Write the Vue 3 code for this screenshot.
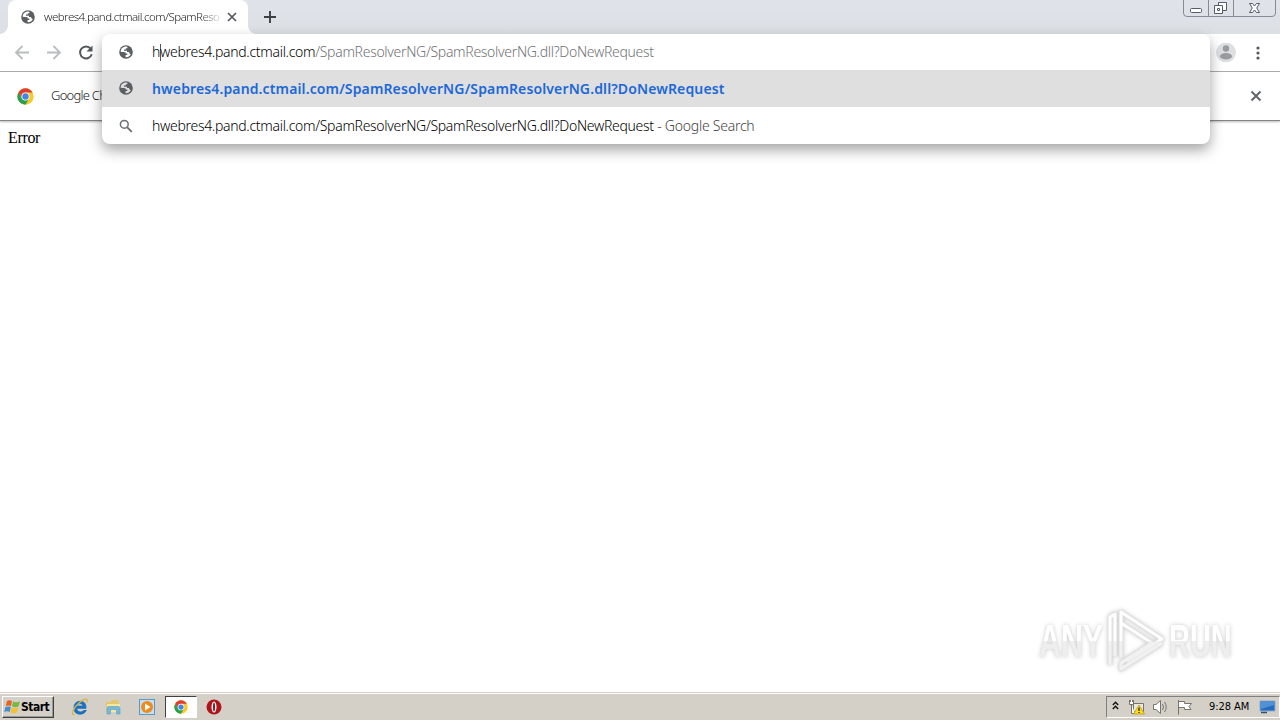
<script setup>
import { h } from 'vue'

const host = 'webres4.pand.ctmail.com'
const path = '/SpamResolverNG/SpamResolverNG.dll?DoNewRequest'

const Globe = () =>
  h('svg', { viewBox: '0 0 14 14', width: 14, height: 14 }, [
    h('circle', { cx: 7, cy: 7, r: 6.8, fill: '#5b5e62' }),
    h('path', {
      fill: 'var(--land, #fff)',
      d: 'M5.5 1.7C3.2 2.3 1.6 4.4 1.6 6.8L4.2 7.1 6.6 7.2V8.6H8.3V10.1H6.6V12.2C8.7 12.4 10.9 11.2 11.8 9.2L10.6 8.6 10 7H8V5.8H5V4.5H6.8V3.3H8.4V1.9C7.5 1.5 6.4 1.4 5.5 1.7Z',
    }),
  ])

const Chrome = (props) =>
  h('svg', { viewBox: '0 0 48 48', width: props.size, height: props.size }, [
    h('circle', { cx: 24, cy: 24, r: 23, fill: '#fbc924' }),
    h('path', { fill: '#df3d32', d: 'M4.1 12.5A23 23 0 0 1 43.9 12.5H24L14 29.8Z' }),
    h('path', { fill: '#27a052', d: 'M4.1 12.5 14 29.8 24 35.5 34 29.8 24 47A23 23 0 0 1 4.1 12.5Z' }),
    h('circle', { cx: 24, cy: 24, r: 11.5, fill: '#fff' }),
    h('circle', { cx: 24, cy: 24, r: 9, fill: '#4285e8' }),
  ])
Chrome.props = ['size']
</script>

<template>
  <div class="screen">
    <header class="tabstrip">
      <div class="tab">
        <Globe class="tab-globe" />
        <span class="tab-title">{{ host }}/SpamReso</span>
        <svg class="tab-close" width="10" height="10" viewBox="0 0 10 10"><path d="M1 1 9 9M9 1 1 9" stroke="#54575b" stroke-width="1.7" /></svg>
      </div>
      <svg class="new-tab" width="12" height="12" viewBox="0 0 12 12"><path d="M6 0V12M0 6H12" stroke="#3c4043" stroke-width="1.9" /></svg>
      <svg class="window-buttons" width="94" height="17" viewBox="0 0 94 17">
        <path d="M.5 0V13Q.5 16.5 4 16.5H89Q92.500 16.500 92.500 13V0M25.500 0V16M50.500 0V16" fill="none" stroke="#868b95" />
        <g fill="#fff" stroke="#565d6a">
          <rect x="7.500" y="8.500" width="11" height="4" rx="1" />
          <path d="M35.500 2.500H43.500V10.500H35.500Z" />
          <path d="M31.500 5.500H39.500V13.500H31.500Z" />
          <path d="M34.500 8.500H36.500V10.500H34.500Z" />
          <path d="M66.500 3.500H69.500L71.500 6 73.500 3.500H76.500L73.700 8 76.500 12.500H73.500L71.500 10 69.500 12.500H66.500L69.300 8Z" />
        </g>
      </svg>
    </header>

    <div class="toolbar">
      <svg class="nav" width="16" height="16" viewBox="0 0 16 16"><path d="M15 8H2M8.500 1.500 2 8 8.500 14.500" fill="none" stroke="#babcbe" stroke-width="1.800" /></svg>
      <svg class="nav" width="16" height="16" viewBox="0 0 16 16"><path d="M1 8H14M7.500 1.500 14 8 7.500 14.500" fill="none" stroke="#babcbe" stroke-width="1.800" /></svg>
      <svg class="nav" width="16" height="16" viewBox="0 0 16 16"><path d="M12.700 4.100A6 6 0 1 0 13.800 9.800" fill="none" stroke="#55585c" stroke-width="2" /><path d="M14.500 1V7H8.500Z" fill="#55585c" /></svg>
      <span class="spacer"></span>
      <svg class="avatar" width="20" height="20" viewBox="0 0 20 20"><circle cx="10" cy="10" r="10" fill="#dedfe1" /><circle cx="10" cy="6" r="3.200" fill="#999b9e" /><ellipse cx="10" cy="13.700" rx="6" ry="3.200" fill="#999b9e" /></svg>
      <svg class="menu" width="4" height="14" viewBox="0 0 4 14" fill="#55585c"><circle cx="2" cy="2" r="1.600" /><circle cx="2" cy="7" r="1.600" /><circle cx="2" cy="12" r="1.600" /></svg>
    </div>

    <div class="infobar">
      <Chrome :size="17" />
      <span class="info-text">Google Chrome</span>
      <span class="spacer"></span>
      <svg width="12" height="12" viewBox="0 0 12 12"><path d="M1.500 1.500 10.500 10.500M10.500 1.500 1.500 10.500" stroke="#606367" stroke-width="1.900" /></svg>
    </div>

    <main class="page">Error</main>

    <div class="omnibox">
      <div class="row">
        <Globe />
        <span class="line"><span>h<i class="caret"></i>{{ host }}</span><span class="dim">{{ path }}</span></span>
      </div>
      <div class="row selected">
        <Globe />
        <span class="line bold">h{{ host }}{{ path }}</span>
      </div>
      <div class="row">
        <svg width="14" height="14" viewBox="0 0 14 14" fill="none" stroke="#6b6e72"><circle cx="5.300" cy="5.300" r="3.900" stroke-width="1.500" /><path d="M8.300 8.300 12.800 12.800" stroke-width="1.900" /></svg>
        <span class="line">h{{ host }}{{ path }}<span class="suffix"> - Google Search</span></span>
      </div>
    </div>

    <div class="watermark">
      <span class="word any"><span>ANY</span></span>
      <svg width="60" height="66" viewBox="0 0 60 66" fill="none" stroke-linejoin="round">
        <defs><linearGradient id="fade" x1="0" y1="0" x2="0" y2="66" gradientUnits="userSpaceOnUse"><stop offset=".5" stop-color="#fff" /><stop offset=".5" stop-color="#f1f1f1" /></linearGradient></defs>
        <path d="M4 57V9L9 6V48M15 49V4L56 31 21 53M56 35 15 61V55L46 35 15 15" stroke="#e0e0e0" stroke-width="5" />
        <path d="M4 57V9L9 6V48M15 49V4L56 31 21 53M56 35 15 61V55L46 35 15 15" stroke="url(#fade)" stroke-width="3" />
      </svg>
      <span class="word run"><span>RUN</span></span>
    </div>

    <footer class="taskbar">
      <div class="start">
        <svg width="17" height="16" viewBox="0 0 17 16"><path d="M3 2Q5.500 .5 8 2L7 7Q4.500 5.800 1.700 7Z" fill="#e66325" /><path d="M9 2.500Q12 4 16 2.500L14.500 7.500Q11 9 8 7.300Z" fill="#78b943" /><path d="M1.500 8Q4.500 6.800 6.800 8L5.700 13Q3 11.500.2 13Z" fill="#438ed0" /><path d="M7.700 8.500Q11 10 14.200 8.500L13 13.500Q9.700 15 6.500 13.500Z" fill="#f5c131" /></svg>
        <b>Start</b>
      </div>
      <div class="launchers">
        <svg width="18" height="18" viewBox="0 0 18 18"><path d="M14 10.300H5.500Q6 14 9.300 14 11.500 14 12.500 12.500H15.300Q13.500 16.200 9.300 16.200 3 16.200 3 9.700 3.200 3.300 9.300 3.300 15.300 3.500 15 10.300ZM5.700 8H12.300Q11.800 5.500 9 5.500 6.300 5.500 5.700 8Z" fill="#1b6fc0" stroke="#1b6fc0" stroke-width=".9" fill-rule="evenodd" /><path d="M3.500 16.500C-1 17 3 9 8.500 4.500S17.500.5 15.800 4.500" fill="none" stroke="#d9b647" stroke-width="1.400" /></svg>
        <svg width="18" height="18" viewBox="0 0 18 18"><path d="M2 4H7L8 2H14L15 5V14H2Z" fill="#e3c66e" /><path d="M3 6H16V14H3Z" fill="#f7e6a0" /><path d="M3 16V10Q3 8.500 5 8.500H14Q16 8.500 16 10V16H12.500V11.500H6.500V16Z" fill="#74b9db" stroke="#5ba0c4" stroke-width=".6" /></svg>
        <svg width="18" height="18" viewBox="0 0 18 18"><rect x="1.500" y="1.500" width="15" height="15" fill="#c4e0f4" stroke="#5a98c8" /><circle cx="9" cy="9" r="6" fill="#ef8b1a" /><path d="M7 5.500 12.500 9 7 12.500Z" fill="#fff" /></svg>
        <div class="active-app"><Chrome :size="14" /></div>
        <svg width="16" height="16" viewBox="0 0 16 16"><circle cx="8" cy="8" r="7.500" fill="#ad151a" /><ellipse cx="8" cy="8" rx="2.500" ry="5.500" fill="#fff" /><ellipse cx="8" cy="8" rx="1" ry="4.500" fill="#8f1518" /></svg>
      </div>
      <span class="spacer"></span>
      <div class="tray">
        <svg class="chevrons" width="7" height="9" viewBox="0 0 7 9"><path d="M.8 4 3.500 1.300 6.200 4M.8 8 3.500 5.300 6.200 8" fill="none" stroke="#111" stroke-width="1.400" /></svg>
        <svg class="network" width="17" height="16" viewBox="0 0 17 16"><path d="M5.500 4.500H15.500V12.500H5.500Z" fill="#e9e7e2" stroke="#77746e" /><path d="M1.500 1V5.500H5.500V1M3.500 5.500V14.500H7M2.500 1V3M4.500 1V3" fill="#fff" stroke="#77746e" /><path d="M11 6 16.500 15H5.500Z" fill="#ffdb20" stroke="#b59600" stroke-width=".7" /><path d="M11 8.500V12M11 13V14" stroke="#333" stroke-width="1.400" /></svg>
        <svg class="sound" width="17" height="16" viewBox="0 0 17 16" fill="none" stroke="#77746e"><path d="M1.500 5.500H4L8.500 1.500V14.500L4 10.500H1.500Z" fill="#fff" /><path d="M10.500 5Q12.500 8 10.500 11M12.500 3Q16 8 12.500 13" /></svg>
        <svg class="flag" width="17" height="16" viewBox="0 0 17 16"><path d="M2.500 1V15.500M2.500 2.500H8.500V4.500H15.500L13 7.500 15 10.500H8.500V8.500H2.500" fill="#fff" stroke="#77746e" /></svg>
        <span class="clock">9:28 AM</span>
        <svg width="17" height="14" viewBox="0 0 17 14"><path d="M1 1H16V11H1Z" fill="#286bbd" stroke="#8aaed3" /><path d="M2 2H15V5L2 9Z" fill="#5192d5" /><path d="M2 12.500H8" stroke="#334e70" stroke-width="1.500" /></svg>
      </div>
    </footer>
  </div>
</template>

<style>
body { margin: 0; overflow: hidden; }
</style>

<style scoped>
.screen { position: relative; display: flex; flex-direction: column; width: 1280px; height: 720px; overflow: hidden; background: #fff; font-family: "Noto Sans", "Open Sans", sans-serif; font-size: 14px; color: #222; }
svg { display: block; flex: none; }
.spacer { flex: 1; }
.tabstrip { display: flex; height: 34px; padding-left: 8px; background: linear-gradient(#e0e4ea, #dcdfe4); }
.tab { position: relative; display: flex; align-items: center; width: 240px; height: 34px; box-sizing: border-box; padding-left: 13px; background: #fff; border-radius: 8px 8px 0 0; }
.tab::before, .tab::after { content: ""; position: absolute; bottom: 0; width: 8px; height: 8px; }
.tab::before { left: -8px; background: radial-gradient(circle at 0 0, transparent 7.5px, #fff 8px); }
.tab::after { right: -8px; background: radial-gradient(circle at 100% 0, transparent 7.5px, #fff 8px); }
.tab-title { width: 177px; margin: -1px 0 0 9px; white-space: nowrap; font-size: 11.5px; font-weight: 350; letter-spacing: -.53px; -webkit-mask-image: linear-gradient(90deg, #000 155px, transparent 180px); mask-image: linear-gradient(90deg, #000 155px, transparent 180px); }
.tab-close { margin-left: 6px; }
.new-tab { margin: 11px 0 0 16px; }
.window-buttons { margin-left: auto; margin-right: 3px; }
.toolbar { display: flex; align-items: center; height: 37px; padding-left: 14px; border-bottom: 1px solid #aaa; }
.nav { margin-right: 16px; transform: translateY(-.5px); }
.avatar { margin-right: 20px; transform: translateY(-.5px); }
.menu { margin-right: 20px; }
.infobar { display: flex; align-items: center; height: 48px; padding: 0 18px 0 17px; border-bottom: 1px solid #858585; box-shadow: 0 1px 2px #bbb; }
.info-text { margin: -2px 0 0 17px; font-size: 13px; font-weight: 350; letter-spacing: -.75px; }
.page { flex: 1; padding: 8px 8px; font: 16px/18px "Liberation Serif", serif; letter-spacing: -.35px; color: #000; }
.omnibox { position: absolute; left: 102px; top: 34px; width: 1108px; height: 110px; border-radius: 8px; background: #fff; box-shadow: 0 6px 14px rgba(0, 0, 0, .36); }
.row { display: flex; align-items: center; height: 37px; padding-left: 17px; }
.row:first-child { height: 36px; }
.row:first-child .line { margin-top: -2px; }
.selected { background: #dfdfdf; --land: #dfdfdf; }
.selected svg { margin-top: -2px; }
.line { margin-left: 19px; white-space: nowrap; font-size: 14px; font-weight: 300; letter-spacing: -.306px; color: #000; }
.bold { font-weight: 600; color: #1b68d8; letter-spacing: .13px; }
.dim { color: #707274; }
.suffix { color: #444; white-space: pre; letter-spacing: -.24px; }
.caret { display: inline-block; width: 1px; height: 17px; margin-right: -1px; vertical-align: -4px; background: #555; }
.watermark { position: absolute; left: 1039px; top: 608px; display: flex; align-items: center; width: 200px; height: 66px; filter: drop-shadow(0 0 2px #c8c8c8); }
.word { flex: none; width: 67px; font: 700 46px/48px "Liberation Sans", sans-serif; }
.word span { display: inline-block; white-space: nowrap; color: transparent; background: linear-gradient(#fff 50%, #eee 50%); background-clip: text; -webkit-background-clip: text; transform-origin: left; }
.any span { transform: scaleX(.66); }
.run { margin-left: 3px; }
.run span { transform: scaleX(.63); }
.taskbar { display: flex; align-items: center; height: 28px; box-sizing: border-box; padding-bottom: 1px; background: #d4d0c8; border-top: 1px solid #d4d0c8; box-shadow: inset 0 1px #fff; font-family: "DejaVu Sans Condensed", "Noto Sans", sans-serif; font-size: 11px; color: #000; }
.start { display: flex; align-items: center; width: 52px; height: 22px; margin: 1px 0 0 2px; box-sizing: border-box; padding-left: 1px; border: 1px solid; border-color: #fff #404040 #404040 #fff; box-shadow: inset -1px -1px #999; font: 12px "DejaVu Sans Condensed", sans-serif; letter-spacing: -.5px; }
.launchers { display: flex; align-items: center; margin-left: 17px; margin-top: 1px; }
.launchers > svg { margin-right: 15px; }
.launchers > svg:nth-child(2) { margin-right: 16px; }
.launchers > svg:nth-child(3) { margin-right: 9px; }
.active-app { display: flex; align-items: center; justify-content: center; width: 32px; height: 22px; box-sizing: border-box; margin-right: 9px; border: 1px solid; border-color: #404040 #fff #fff #404040; background: #fff; }
.tray { display: flex; align-items: center; width: 174px; height: 22px; box-sizing: border-box; margin-top: 1px; padding-left: 5px; border: 1px solid; border-color: #808080 #fff #fff #808080; }
.chevrons { margin-top: -3px; }
.network { margin-left: 9px; }
.sound { margin-left: 7px; }
.flag { margin-left: 7px; }
.clock { width: 43px; margin: 0 7px 0 16px; white-space: nowrap; letter-spacing: -.05px; }
</style>
